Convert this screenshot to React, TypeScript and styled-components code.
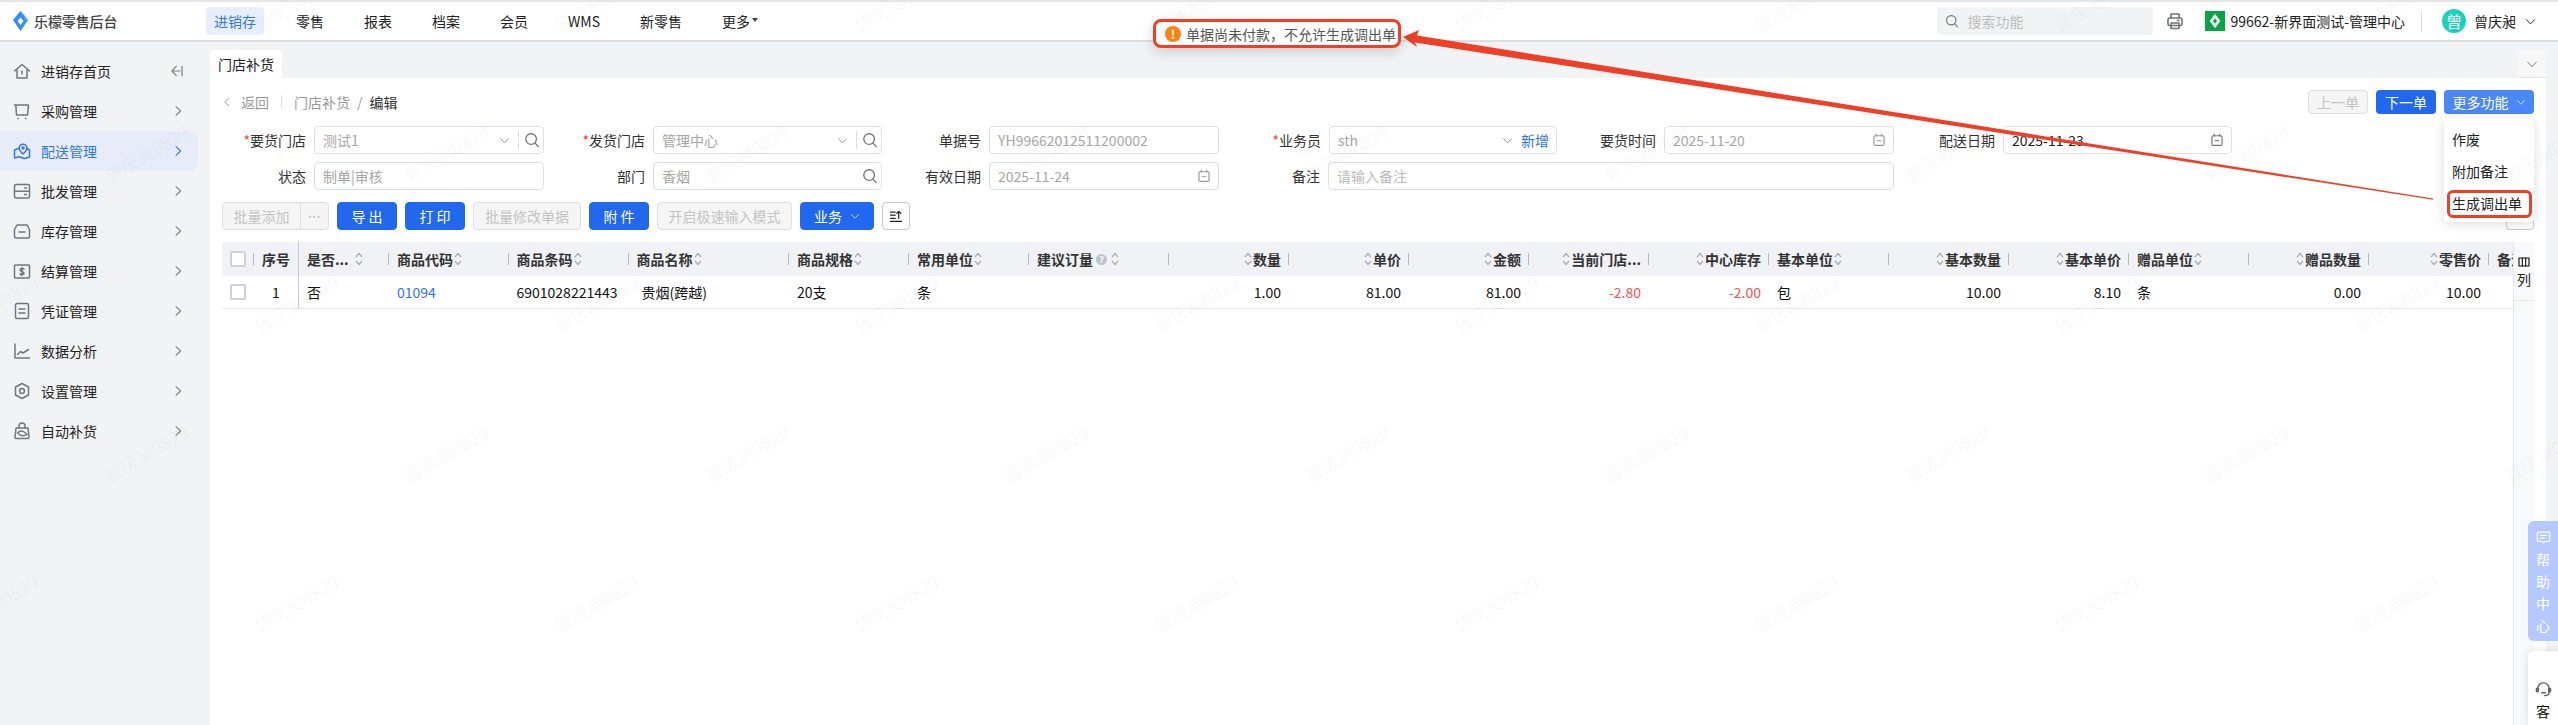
import React from "react";
import styled, { createGlobalStyle } from "styled-components";

const Global = createGlobalStyle`
  html, body { margin: 0; padding: 0; width: 2558px; height: 725px; overflow: hidden; background: #fff; }
  body { font-family: "Noto Sans CJK SC", "Noto Sans", sans-serif; font-size: 14px; color: #222; }
  * { box-sizing: border-box; }
`;

const RED = "#ee4026";
const BLUE = "#2268ee";

const Page = styled.div`
  position: relative; width: 2558px; height: 725px; overflow: hidden;
  display: flex; flex-direction: column;
`;
const Header = styled.header`
  height: 42px; flex: none; display: flex; align-items: center; padding: 0 22px 0 13px;
  border-top: 2px solid #e6e6e6; border-bottom: 2px solid #dedede; background: #fff;
`;
const Logo = styled.div`
  width: 193px; display: flex; align-items: center; gap: 6px; font-weight: 500; color: #444; letter-spacing: -.1px;
`;
const Nav = styled.nav`display: flex; align-items: center; gap: 24px;`;
const NavItem = styled.div<{ $active?: boolean }>`
  height: 28px; line-height: 28px; padding: 0 8px; border-radius: 4px; white-space: nowrap;
  color: ${p => (p.$active ? "#3377f0" : "#222")};
  background: ${p => (p.$active ? "#e8effc" : "transparent")};
  ${p => p.$active && "width: 58px; text-align: center; padding: 0;"}
  display: flex; align-items: center; justify-content: center; gap: 2px;
`;
const Caret = styled.span`
  width: 0; height: 0; border-left: 3.5px solid transparent; border-right: 3.5px solid transparent;
  border-top: 4px solid #444; margin-top: -3px;
`;
const HeaderRight = styled.div`margin-left: auto; display: flex; align-items: center;`;
const SearchBox = styled.div`
  width: 216px; height: 28px; background: #f2f3f5; border-radius: 4px; display: flex; align-items: center;
  gap: 8px; padding-left: 8px; color: #bbb; margin-right: 13px;
`;
const Store = styled.div`display: flex; align-items: center; gap: 5px; margin-left: 21px; color: #222; white-space: nowrap;`;
const VLine = styled.div`width: 1px; height: 22px; background: #e2e2e2; margin: 0 20px 0 16px;`;
const Avatar = styled.div`
  width: 24px; height: 24px; border-radius: 50%; background: #18d2bd; color: #fff; display: flex;
  align-items: center; justify-content: center; font-size: 16px; margin-right: 8px;
`;
const UserCaret = styled.span`margin-left: 9px; display: block;`;
const Body = styled.div`flex: 1; min-height: 0; display: flex; background: #f2f3f5;`;
const Sidebar = styled.aside`width: 210px; flex: none; padding-top: 9px;`;
const SideItem = styled.div<{ $active?: boolean }>`
  width: 198px; height: 40px; display: flex; align-items: center; gap: 10px; padding: 0 14px 0 13px; border-radius: 0 8px 8px 0;
  color: ${p => (p.$active ? "#3377f0" : "#222")};
  background: ${p => (p.$active ? "#e8ecf8" : "transparent")};
`;
const SideLabel = styled.span`flex: 1;`;
const Main = styled.main`flex: 1; min-width: 0; margin-right: 12px; display: flex; flex-direction: column;`;
const TabBar = styled.div`height: 36px; flex: none; display: flex; justify-content: space-between; align-items: flex-end;`;
const Tab = styled.div`
  width: 72px; height: 28px; background: #fff; border-radius: 4px 4px 0 0; display: flex; align-items: center; justify-content: center;
`;
const TabMore = styled.div`
  width: 28px; height: 28px; background: #f8f8f8; border-radius: 4px 4px 0 0; display: flex; align-items: center; justify-content: center;
  border-bottom: 1px solid #e4e4e4;
`;
const Panel = styled.section`flex: 1; min-height: 0; background: #fff; padding: 12px 12px 0 12px; display: flex; flex-direction: column;`;
const TopRow = styled.div`height: 24px; flex: none; display: flex; align-items: center;`;
const Crumb = styled.div`display: flex; align-items: center; color: #999;`;
const CrumbBack = styled.span`margin-left: 9px;`;
const CrumbSep = styled.span`width: 1px; height: 14px; background: #e2e2e2; margin: 0 12px;`;
const CrumbSlash = styled.span`margin-left: 7px;`;
const CrumbNow = styled.span`color: #333; margin-left: 7px;`;
const TopActions = styled.div`margin-left: auto; display: flex; gap: 8px;`;
const SmallBtn = styled.button<{ $kind: "off" | "blue" | "light" }>`
  height: 24px; width: ${p => (p.$kind === "light" ? 90 : 60)}px; border-radius: 4px; font: inherit; padding: 0;
  display: flex; align-items: center; justify-content: center; gap: 7px;
  color: ${p => (p.$kind === "off" ? "#c4c4c4" : "#fff")};
  background: ${p => (p.$kind === "off" ? "#f5f5f5" : p.$kind === "blue" ? BLUE : "#4c87f6")};
  border: 1px solid ${p => (p.$kind === "off" ? "#e0e0e0" : "transparent")};
`;
const MoreWrap = styled.div`position: relative;`;
const Dropdown = styled.div`
  position: absolute; top: 28px; right: 0; width: 90px; height: 104px; background: #fff; border-radius: 4px; padding-top: 5px;
  box-shadow: 0 2px 12px rgba(0,0,0,.14); z-index: 5;
`;
const DropItem = styled.div<{ $marked?: boolean }>`
  position: relative; height: 32px; line-height: 32px; padding-left: 8px; color: #222;
  ${p => p.$marked && `&::after { content: ""; position: absolute; left: 3px; right: 2px; top: 3px; bottom: 1px; border: 3px solid ${RED}; border-radius: 6px; }`}
`;
const FormGrid = styled.div`
  margin-top: 12px; display: grid; grid-template-columns: 322px 338px 337px 338px 337px 338px;
  grid-auto-rows: 28px; row-gap: 8px;
`;
const Field = styled.div<{ $span?: number }>`
  display: flex; align-items: center; justify-content: flex-end; gap: 8px;
  ${p => p.$span && `grid-column: span ${p.$span};`}
`;
const Label = styled.label`color: #333; white-space: nowrap;`;
const Star = styled.span`color: #f33;`;
const InputBox = styled.div<{ $w?: number }>`
  width: ${p => p.$w ?? 230}px; height: 28px; border: 1px solid #dcdfe6; border-radius: 4px; display: flex; align-items: center;
  padding: 0 3px 0 8px; background: #fff;
`;
const InputText = styled.span<{ $tone?: "value" | "hint" }>`
  flex: 1; white-space: nowrap; color: ${p => (p.$tone === "value" ? "#222" : p.$tone === "hint" ? "#bbb" : "#a6a6a6")};
`;
const AddLink = styled.span`color: #2e75f6; margin: 0 4px 0 8px;`;
const InnerLine = styled.span`width: 1px; height: 18px; background: #dcdfe6; margin: 0 5px 0 8px;`;
const CalSlot = styled.span`display: flex; margin-right: 4px;`;
const Toolbar = styled.div`margin-top: 12px; height: 28px; flex: none; display: flex; gap: 8px;`;
const Btn = styled.button<{ $w: number; $off?: boolean }>`
  width: ${p => p.$w}px; height: 28px; border-radius: 4px; padding: 0; font: inherit;
  display: flex; align-items: center; justify-content: center; gap: 8px; white-space: nowrap;
  color: ${p => (p.$off ? "#c4c4c4" : "#fff")}; background: ${p => (p.$off ? "#f5f5f5" : BLUE)};
  border: 1px solid ${p => (p.$off ? "#dedede" : BLUE)};
`;
const SplitBtn = styled.div`
  width: 107px; height: 28px; display: flex; border: 1px solid #dedede; border-radius: 4px; background: #f5f5f5; color: #c4c4c4;
`;
const SplitMain = styled.span`flex: 1; display: flex; align-items: center; justify-content: center; border-right: 1px solid #dedede;`;
const SplitDots = styled.span`
  width: 27px; display: flex; align-items: center; justify-content: center; font-family: "Liberation Sans", sans-serif; font-weight: 700; font-size: 13px;
`;
const IconBtn = styled.button<{ $right?: boolean }>`
  width: 28px; height: 28px; padding: 0; border: 1px solid #c8c8c8; border-radius: 4px; background: #fff;
  display: flex; align-items: center; justify-content: center; ${p => p.$right && "margin-left: auto;"}
`;
const TableArea = styled.div`margin-top: 12px; flex: 1; min-height: 0; display: flex;`;
const TableScroll = styled.div`flex: 1; min-width: 0; overflow: hidden;`;
const Row = styled.div<{ $head?: boolean }>`
  display: flex; min-width: 100%; width: max-content;
  height: ${p => (p.$head ? 34 : 33)}px;
  background: ${p => (p.$head ? "#f0f2f5" : "#fff")};
  font-weight: ${p => (p.$head ? 700 : 400)};
  color: ${p => (p.$head ? "#333" : "#111")};
  ${p => !p.$head && "border-bottom: 1px solid #e9e9e9;"}
`;
const Cell = styled.div<{ $w: number; $right?: boolean; $sep?: boolean; $fixed?: boolean; $center?: boolean; $pad?: number }>`
  position: relative; width: ${p => p.$w}px; flex: none; display: flex; align-items: center; white-space: nowrap; padding: 0 ${p => p.$pad ?? 8}px;
  justify-content: ${p => (p.$center ? "center" : p.$right ? "flex-end" : "flex-start")};
  ${p => p.$fixed && "border-right: 1px solid #c8ccd2;"}
  ${p => p.$sep && `&::after { content: ""; position: absolute; right: 0; top: 11px; height: 12px; width: 1px; background: #b4b8c0; }`}
`;
const Check = styled.span`width: 16px; height: 16px; border: 2px solid #d2d2d2; border-radius: 2px; background: #fff; display: block;`;
const CodeLink = styled.span`color: #2e75f6;`;
const Minus = styled.span`color: #f4525a;`;
const Indent = styled.span`padding-left: 5px;`;
const TitleGap = styled.span`margin-right: 5px;`;
const HelpDot = styled.span`
  width: 11px; height: 11px; border-radius: 50%; background: #c0c3cf; color: #fff; font-size: 9px; line-height: 11px; text-align: center;
  margin: 0 3px; font-weight: 700;
`;
const SidePanel = styled.div`
  width: 21px; flex: none; background: #f8f9fb; border-left: 1px solid #e4e6ea; display: flex; flex-direction: column; align-items: center;
`;
const SideTool = styled.div`
  width: 100%; height: 59px; padding-top: 14px; border-bottom: 1px solid #e6e8ec; display: flex; flex-direction: column; align-items: center; gap: 2px; line-height: 18px;
`;
const Toast = styled.div`
  position: absolute; left: 1153px; top: 19px; width: 248px; height: 29px; background: #fff; border: 3px solid ${RED}; border-radius: 8px;
  display: flex; align-items: center; gap: 5px; padding-left: 9px; white-space: nowrap; color: #555; z-index: 10;
  box-shadow: 0 4px 14px rgba(0,0,0,.16);
`;
const ToastIcon = styled.span`
  width: 16px; height: 16px; border-radius: 50%; background: #fa8214; color: #fff; font-size: 12px; font-weight: 700; line-height: 16px; text-align: center; flex: none;
`;
const ArrowLayer = styled.svg`position: absolute; inset: 0; z-index: 9; pointer-events: none;`;
const Watermarks = styled.div`
  position: absolute; left: -79px; top: -72px; display: grid; grid-template-columns: repeat(19, 150px); grid-auto-rows: 150px;
  pointer-events: none; z-index: 8;
`;
const Mark = styled.div`
  display: flex; align-items: center; justify-content: center; font-size: 18px; white-space: nowrap;
  color: rgba(40,40,50,.045); transform: rotate(-30deg);
`;
const HelpTab = styled.div`
  position: absolute; right: 0; top: 521px; width: 30px; height: 120px; background: #b5c8ff; border-radius: 6px 0 0 6px; color: #fff;
  display: flex; flex-direction: column; align-items: center; padding-top: 9px; line-height: 22px; z-index: 7; gap: 0;
`;
const HelpIcon = styled.span`height: 17px; margin-bottom: 1px; display: block;`;
const ServiceTab = styled.div`
  position: absolute; right: 0; top: 651px; width: 30px; height: 74px; background: #fff; border-radius: 6px 0 0 0; color: #111;
  box-shadow: 0 0 8px rgba(0,0,0,.12); display: flex; flex-direction: column; align-items: center; padding-top: 30px; line-height: 20px; z-index: 7; gap: 3px;
`;

const Stroke: React.FC<{ size?: number; color?: string; w?: number; children: React.ReactNode }> = ({ size = 18, color = "#72757f", w = 1.5, children }) => (
  <svg width={size} height={size} viewBox="0 0 18 18" fill="none" stroke={color} strokeWidth={w} strokeLinecap="round" strokeLinejoin="round" style={{ flex: "none", display: "block" }}>
    {children}
  </svg>
);
const Chevron: React.FC<{ dir?: "right" | "down" | "left"; color?: string; size?: number }> = ({ dir = "right", color = "#808080", size = 12 }) => (
  <Stroke size={size} color={color} w={size > 12 ? 1.3 : 1.6}>
    {dir === "right" && <path d="M6 2.5 13 9 6 15.5" />}
    {dir === "left" && <path d="M12 2.5 5 9 12 15.5" />}
    {dir === "down" && <path d="M2.5 6 9 13 15.5 6" />}
  </Stroke>
);
const Lens: React.FC<{ size?: number; color?: string }> = ({ size = 16, color = "#777" }) => (
  <Stroke size={size} color={color} w={1.5}><circle cx="8" cy="8" r="6" /><path d="M12.5 12.5 16 16.5" /></Stroke>
);
const Cal: React.FC<{ color?: string }> = ({ color = "#9a9a9a" }) => (
  <CalSlot>
    <Stroke size={14} color={color} w={1.5}><rect x="2.5" y="3.5" width="13" height="12.5" rx="1.5" /><path d="M5.5 1.5V4M12.5 1.5V4M6.5 10H11.5" /></Stroke>
  </CalSlot>
);
const Sort: React.FC = () => (
  <svg width="8" height="14" viewBox="0 0 8 14" fill="none" stroke="#a8abb2" strokeWidth="1.2" style={{ flex: "none", margin: "0 1px" }}>
    <path d="M1 5 4 1.5 7 5M1 9 4 12.5 7 9" />
  </svg>
);
const BrandMark: React.FC = () => (
  <svg width="15" height="20" viewBox="0 0 15 20" style={{ flex: "none" }}>
    <path d="M7.5 0 15 9 7.5 20 0 9Z" fill="#2f8ff5" />
    <path d="M7.5 6.5 10.5 10 7.5 14 4.5 10Z" fill="#fff" />
    <path d="M11 3 15 9 12 9Z" fill="#64b4fa" />
  </svg>
);
const StoreMark: React.FC = () => (
  <svg width="20" height="20" viewBox="0 0 19 19" style={{ flex: "none" }}>
    <rect width="19" height="19" fill="#08a545" />
    <path d="M9.5 2.5 14.5 9.5 9.5 16.5 4.5 9.5Z" fill="#fff" />
    <path d="M9.5 6.8 11.5 9.5 9.5 12.2 7.5 9.5Z" fill="#08a545" />
  </svg>
);
const Printer: React.FC = () => (
  <Stroke size={18} color="#70737a" w={1.6}>
    <path d="M5 6V2h8v4" /><rect x="2" y="6" width="14" height="7.5" rx="1.5" /><path d="M5 11h8v5.5H5z" /><path d="M11.5 8.5h1.5" />
  </Stroke>
);
const Collapse: React.FC = () => (
  <Stroke size={14} color="#808080" w={1.6}><path d="M8 3 2.5 9 8 15M2.5 9H13M15.5 3V15" /></Stroke>
);

const sideIcons: Record<string, React.ReactNode> = {
  home: <path d="M1.5 9 9 2.5 16.5 9M4 7.5V16H14V7.5M9 9V12" />,
  cart: <><path d="M1.5 3H15.5L14.5 13H3.5L2.8 3" /><path d="M5 16.5h.5M12.5 16.5h.5" /></>,
  map: <><path d="M5.5 6.5 1.5 8V16L6 14.8 11.5 16.5 16.5 15V8L14 6.5" /><path d="M10 12C7.5 9.8 6.2 8 6.2 6A3.8 3.8 0 0 1 13.8 6C13.8 8 12.5 9.8 10 12Z" /><circle cx="10" cy="6" r="1" /></>,
  server: <><rect x="1.5" y="2.5" width="15" height="13.5" rx="1.5" /><path d="M1.5 9.2H16.5M11.5 6H13.5M11.5 12.6H13.5" /></>,
  inbox: <><path d="M4 3H14L16.5 7.5V14.5A1.5 1.5 0 0 1 15 16H3A1.5 1.5 0 0 1 1.5 14.5V7.5Z" /><path d="M6 10H12" /></>,
  money: <><rect x="1.5" y="3" width="15" height="13" rx="1" /><path d="M11 7.2C10.5 6.4 7 6 7 8 7 10 11 9 11 11.2 11 13 7.5 12.8 7 11.8M9 5.4V13.6" /></>,
  doc: <><rect x="2.5" y="1.5" width="13" height="15" rx="1.5" /><path d="M6 7H12M6 11H12" /></>,
  chart: <><path d="M2 2V16H16.5" /><path d="M4.5 12.5 7.5 9.5 10 11 15.5 7.5" /></>,
  hex: <><path d="M9 1.5 15.5 5V13L9 16.5 2.5 13V5Z" /><circle cx="9" cy="9" r="2.4" /></>,
  lock: <><path d="M3 6H15L16 15.5A1 1 0 0 1 15 16.5H3A1 1 0 0 1 2 15.5Z" /><path d="M6 6V4A3 3 0 0 1 12 4V6" /><path d="M4.5 11C7.5 8 11 8.5 14 12.5 11 14.5 7.5 14 4.5 11Z" /></>,
};

const menu = [
  ["home", "进销存首页"], ["cart", "采购管理"], ["map", "配送管理"], ["server", "批发管理"], ["inbox", "库存管理"],
  ["money", "结算管理"], ["doc", "凭证管理"], ["chart", "数据分析"], ["hex", "设置管理"], ["lock", "自动补货"],
];

type Col = { title: string; w: number; right?: boolean; value: React.ReactNode; tip?: boolean };
const columns: Col[] = [
  { title: "是否...", w: 90, value: "否" },
  { title: "商品代码", w: 119.5, value: <CodeLink>01094</CodeLink> },
  { title: "商品条码", w: 120, value: "6901028221443" },
  { title: "商品名称", w: 160.5, value: <Indent>贵烟(跨越)</Indent> },
  { title: "商品规格", w: 120, value: "20支" },
  { title: "常用单位", w: 120, value: "条" },
  { title: "建议订量", w: 140, value: "", tip: true },
  { title: "数量", w: 120, right: true, value: "1.00" },
  { title: "单价", w: 120, right: true, value: "81.00" },
  { title: "金额", w: 120, right: true, value: "81.00" },
  { title: "当前门店...", w: 120, right: true, value: <Minus>-2.80</Minus> },
  { title: "中心库存", w: 120, right: true, value: <Minus>-2.00</Minus> },
  { title: "基本单位", w: 120, value: "包" },
  { title: "基本数量", w: 120, right: true, value: "10.00" },
  { title: "基本单价", w: 120, right: true, value: "8.10" },
  { title: "赠品单位", w: 120, value: "条" },
  { title: "赠品数量", w: 120, right: true, value: "0.00" },
  { title: "零售价", w: 120, right: true, value: "10.00" },
  { title: "备注", w: 120, value: "" },
];

const marks = Array.from({ length: 19 * 7 }, (_, i) => {
  const c = i % 19;
  const r = Math.floor(i / 19);
  return (c + r) % 2 === 0;
});

export default function App() {
  return (
    <Page>
      <Global />
      <Header>
        <Logo><BrandMark />乐檬零售后台</Logo>
        <Nav>
          <NavItem $active>进销存</NavItem>
          {["零售", "报表", "档案", "会员", "WMS", "新零售"].map(t => <NavItem key={t}>{t}</NavItem>)}
          <NavItem>更多<Caret /></NavItem>
        </Nav>
        <HeaderRight>
          <SearchBox><Lens size={14} />搜索功能</SearchBox>
          <Printer />
          <Store><StoreMark />99662-新界面测试-管理中心</Store>
          <VLine />
          <Avatar>曾</Avatar>
          曾庆昶
          <UserCaret><Chevron dir="down" color="#333" size={11} /></UserCaret>
        </HeaderRight>
      </Header>
      <Body>
        <Sidebar>
          {menu.map(([icon, label], i) => (
            <SideItem key={label} $active={i === 2}>
              <Stroke color={i === 2 ? "#3377f0" : "#72757f"}>{sideIcons[icon]}</Stroke>
              <SideLabel>{label}</SideLabel>
              {i === 0 ? <Collapse /> : <Chevron color={i === 2 ? "#3377f0" : "#808080"} />}
            </SideItem>
          ))}
        </Sidebar>
        <Main>
          <TabBar>
            <Tab>门店补货</Tab>
            <TabMore><Chevron dir="down" color="#a0a0a0" size={12} /></TabMore>
          </TabBar>
          <Panel>
            <TopRow>
              <Crumb>
                <Chevron dir="left" color="#999" size={10} />
                <CrumbBack>返回</CrumbBack>
                <CrumbSep />
                门店补货<CrumbSlash>/</CrumbSlash><CrumbNow>编辑</CrumbNow>
              </Crumb>
              <TopActions>
                <SmallBtn $kind="off">上一单</SmallBtn>
                <SmallBtn $kind="blue">下一单</SmallBtn>
                <MoreWrap>
                  <SmallBtn $kind="light">更多功能<Chevron dir="down" color="#d5e2fd" size={10} /></SmallBtn>
                  <Dropdown>
                    <DropItem>作废</DropItem>
                    <DropItem>附加备注</DropItem>
                    <DropItem $marked>生成调出单</DropItem>
                  </Dropdown>
                </MoreWrap>
              </TopActions>
            </TopRow>
            <FormGrid>
              <Field><Label><Star>*</Star>要货门店</Label><InputBox><InputText>测试1</InputText><Chevron dir="down" color="#999" size={11} /><InnerLine /><Lens /></InputBox></Field>
              <Field><Label><Star>*</Star>发货门店</Label><InputBox $w={229}><InputText>管理中心</InputText><Chevron dir="down" color="#999" size={11} /><InnerLine /><Lens /></InputBox></Field>
              <Field><Label>单据号</Label><InputBox><InputText>YH99662012511200002</InputText></InputBox></Field>
              <Field><Label><Star>*</Star>业务员</Label><InputBox $w={228}><InputText>sth</InputText><Chevron dir="down" color="#999" size={11} /><AddLink>新增</AddLink></InputBox></Field>
              <Field><Label>要货时间</Label><InputBox><InputText>2025-11-20</InputText><Cal /></InputBox></Field>
              <Field><Label>配送日期</Label><InputBox $w={229}><InputText $tone="value">2025-11-23</InputText><Cal color="#777" /></InputBox></Field>
              <Field><Label>状态</Label><InputBox><InputText>制单|审核</InputText></InputBox></Field>
              <Field><Label>部门</Label><InputBox $w={229}><InputText>香烟</InputText><Lens /></InputBox></Field>
              <Field><Label>有效日期</Label><InputBox><InputText>2025-11-24</InputText><Cal /></InputBox></Field>
              <Field $span={2}><Label>备注</Label><InputBox $w={566}><InputText $tone="hint">请输入备注</InputText></InputBox></Field>
            </FormGrid>
            <Toolbar>
              <SplitBtn><SplitMain>批量添加</SplitMain><SplitDots>···</SplitDots></SplitBtn>
              <Btn $w={60}>导 出</Btn>
              <Btn $w={60}>打 印</Btn>
              <Btn $w={108} $off>批量修改单据</Btn>
              <Btn $w={60}>附 件</Btn>
              <Btn $w={135} $off>开启极速输入模式</Btn>
              <Btn $w={74}>业务<Chevron dir="down" color="#cfe0ff" size={10} /></Btn>
              <IconBtn>
                <Stroke size={14} color="#222" w={1.6}><path d="M2 4H8M2 8H8M2 12H8M12.5 12V3M10 5.5 12.5 3 15 5.5M2 16H16" /></Stroke>
              </IconBtn>
              <IconBtn $right />
            </Toolbar>
            <TableArea>
              <TableScroll>
                <Row $head>
                  <Cell $w={32} $sep $pad={8}><Check /></Cell>
                  <Cell $w={45} $fixed $center $pad={0}>序号</Cell>
                  {columns.map(c => (
                    <Cell key={c.title} $w={c.w} $right={c.right} $sep={c.title !== "备注"}>
                      {c.right && <Sort />}
                      {c.title === "是否..." ? <TitleGap>{c.title}</TitleGap> : c.title}
                      {c.tip && <HelpDot>?</HelpDot>}
                      {!c.right && c.title !== "备注" && <Sort />}
                    </Cell>
                  ))}
                </Row>
                <Row>
                  <Cell $w={32} $pad={8}><Check /></Cell>
                  <Cell $w={45} $fixed $center $pad={0}>1</Cell>
                  {columns.map(c => (
                    <Cell key={c.title} $w={c.w} $right={c.right}>{c.value}</Cell>
                  ))}
                </Row>
              </TableScroll>
              <SidePanel>
                <SideTool>
                  <Stroke size={12} color="#111" w={1.7}><rect x="1.5" y="3" width="15" height="12" /><path d="M6.5 3V15M11.5 3V15" /></Stroke>
                  列
                </SideTool>
              </SidePanel>
            </TableArea>
          </Panel>
        </Main>
      </Body>

      <HelpTab>
        <HelpIcon>
          <Stroke size={15} color="#fff" w={1.4}><path d="M1.5 2.5H16.5V13.5H11L9 15.5 7 13.5H1.5Z" /><path d="M5 6.5H13M5 9.8H10" /></Stroke>
        </HelpIcon>
        <span>帮</span><span>助</span><span>中</span><span>心</span>
      </HelpTab>
      <ServiceTab>
        <Stroke size={17} color="#5d6070" w={1.5}><path d="M3 9.5V8A6 6 0 0 1 15 8V12C15 14.5 13 15.5 10 15.5" /><rect x="1.5" y="7.5" width="2" height="4" rx="1" /><rect x="14.5" y="7.5" width="2" height="4" rx="1" /><path d="M7 12.5H11" /></Stroke>
        <span>客</span>
      </ServiceTab>

      <Watermarks>
        {marks.map((on, i) => <Mark key={i}>{on ? "曾庆昶0829" : ""}</Mark>)}
      </Watermarks>

      <ArrowLayer width="2558" height="725" viewBox="0 0 2558 725">
        <polygon points="1403,37 1419,30 1417,35.5 2433,198.6 2433,199.8 1415,42.5 1417,47" fill={RED} />
      </ArrowLayer>
      <Toast><ToastIcon>!</ToastIcon>单据尚未付款，不允许生成调出单</Toast>
    </Page>
  );
}
